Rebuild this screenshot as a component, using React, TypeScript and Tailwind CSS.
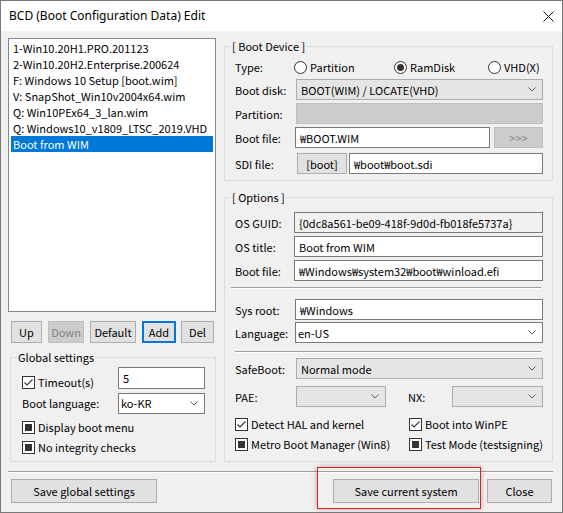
import React from 'react';

const items = [
  '1-Win10.20H1.PRO.201123',
  '2-Win10.20H2.Enterprise.200624',
  'F: Windows 10 Setup [boot.wim]',
  'V: SnapShot_Win10v2004x64.wim',
  'Q: Win10PEx64_3_lan.wim',
  'Q: Windows10_v1809_LTSC_2019.VHD',
  'Boot from WIM',
];

function Chevron({ light }: { light?: boolean }) {
  return (
    <svg width="8" height="5" viewBox="0 0 8 5" className="shrink-0">
      <path d="M0.5 0.5 L4 4 L7.5 0.5" fill="none" stroke={light ? '#c4c4c4' : '#606060'} strokeWidth="1" />
    </svg>
  );
}

function Btn({
  children,
  className = '',
  disabled,
  focused,
}: {
  children: React.ReactNode;
  className?: string;
  disabled?: boolean;
  focused?: boolean;
}) {
  const tone = disabled
    ? 'bg-[#cccccc] border border-[#bfbfbf] text-[#838383]'
    : focused
      ? 'bg-[#e1e1e1] border-2 border-[#0078d7]'
      : 'bg-[#e1e1e1] border border-[#adadad]';
  return <div className={`flex items-center justify-center shrink-0 whitespace-nowrap ${tone} ${className}`}>{children}</div>;
}

function TextBox({ value, className = '', readOnly }: { value: string; className?: string; readOnly?: boolean }) {
  return (
    <div
      className={`h-[21px] min-w-0 flex items-center pl-[4px] border border-[#7a7a7a] whitespace-nowrap overflow-hidden ${
        readOnly ? 'bg-[#f0f0f0]' : 'bg-white'
      } ${className}`}
    >
      {value}
    </div>
  );
}

function Select({
  value = '',
  kind = 'list',
  className = '',
}: {
  value?: string;
  kind?: 'list' | 'edit' | 'off';
  className?: string;
}) {
  const tone =
    kind === 'edit'
      ? 'bg-white border-[#7a7a7a] pl-[2px]'
      : kind === 'off'
        ? 'bg-[#cccccc] border-[#bfbfbf] pl-[4px]'
        : 'bg-[#e5e5e5] border-[#acacac] pl-[4px]';
  return (
    <div className={`h-[21px] min-w-0 flex items-center justify-between border pr-[6px] ${tone} ${className}`}>
      <span className="whitespace-nowrap">{value}</span>
      <Chevron light={kind === 'off'} />
    </div>
  );
}

function Check({ state, label, className = '' }: { state: 'checked' | 'mixed'; label: string; className?: string }) {
  return (
    <div className={`flex items-center h-4 gap-[3px] ${className}`}>
      <div className="w-[13px] h-[13px] border border-[#333333] bg-white flex items-center justify-center shrink-0">
        {state === 'checked' ? (
          <svg width="11" height="11" viewBox="0 0 11 11">
            <path d="M1.5 5.5 L4 8 L9.5 2.5" fill="none" stroke="#333333" strokeWidth="1.1" />
          </svg>
        ) : (
          <div className="w-[7px] h-[7px] bg-[#333333]" />
        )}
      </div>
      <span className="whitespace-nowrap">{label}</span>
    </div>
  );
}

function Radio({ checked, label, className = '' }: { checked?: boolean; label: string; className?: string }) {
  return (
    <div className={`flex items-center gap-[3px] ${className}`}>
      <div className="w-[13px] h-[13px] rounded-full border border-[#333333] bg-white flex items-center justify-center shrink-0">
        {checked && <div className="w-[7px] h-[7px] rounded-full bg-[#333333]" />}
      </div>
      <span>{label}</span>
    </div>
  );
}

function Group({
  title,
  className = '',
  children,
}: {
  title: string;
  className?: string;
  children: React.ReactNode;
}) {
  return (
    <fieldset className={`min-w-0 border border-[#dcdcdc] ${className}`}>
      <legend className="ml-[6px] px-[1px] leading-4 h-4">{title}</legend>
      {children}
    </fieldset>
  );
}

function Sep({ className = '' }: { className?: string }) {
  return <div className={`h-[2px] border-t border-t-[#a0a0a0] border-b border-b-white ${className}`} />;
}

export default function App() {
  return (
    <div className="relative w-[563px] h-[513px] border border-[#7a7a7a] bg-[#f0f0f0] flex flex-col text-[11px] leading-4 text-black font-['Noto_Sans_CJK_KR',sans-serif]">
      {/* title bar */}
      <div className="h-[30px] bg-white flex items-center justify-between pl-[8px] pr-[8px] shrink-0">
        <span className="text-[12px] font-['Noto_Sans',sans-serif]">BCD (Boot Configuration Data) Edit</span>
        <svg width="11" height="11" viewBox="0 0 11 11">
          <path d="M0.5 0.5 L10.5 10.5 M10.5 0.5 L0.5 10.5" stroke="#111" strokeWidth="1" />
        </svg>
      </div>

      <div className="flex px-[7px] pt-[7px] gap-[8px]">
        {/* left column */}
        <div className="w-[208px] flex flex-col shrink-0">
          <div className="h-[274px] border border-[#828790] bg-white pt-[1px] px-[2px] overflow-hidden">
            {items.map((it, i) => (
              <div
                key={it}
                className={`h-4 pl-[2px] whitespace-nowrap ${i === items.length - 1 ? 'bg-[#0078d7] text-white' : ''}`}
              >
                {it}
              </div>
            ))}
          </div>

          <div className="flex mt-[9px] pl-[3px] gap-[6px]">
            <Btn className="w-[31px] h-[22px]">Up</Btn>
            <Btn className="w-[36px] h-[22px]" disabled>
              Down
            </Btn>
            <Btn className="w-[46px] h-[22px]">Default</Btn>
            <Btn className="w-[34px] h-[22px]" focused>
              Add
            </Btn>
            <Btn className="w-[33px] h-[22px] -ml-px">Del</Btn>
          </div>

          <Group title="Global settings" className="mt-[6px] ml-[2px] w-[206px]">
            <div className="pl-[11px] pr-[10px] pt-[2px] pb-[6px] flex flex-col">
              <div className="flex items-start justify-between h-[22px]">
                <Check state="checked" label="Timeout(s)" className="mt-[7px]" />
                <div className="w-[87px] h-[22px] bg-white border border-[#7a7a7a] flex items-center pl-[4px]">5</div>
              </div>
              <div className="flex items-center justify-between h-[20px] mt-[4px]">
                <span>Boot language:</span>
                <Select value="ko-KR" kind="edit" className="w-[87px] h-[20px] pr-[4px]" />
              </div>
              <div className="mt-[6px]">
                <Check state="mixed" label="Display boot menu" />
              </div>
              <div className="mt-[4px]">
                <Check state="mixed" label="No integrity checks" />
              </div>
            </div>
          </Group>
        </div>

        {/* right column */}
        <div className="w-[329px] flex flex-col shrink-0">
          <Group title="[ Boot Device ]" className="w-full">
            <div className="pl-[10px] pr-[9px] pt-[3px] pb-[6px] flex flex-col">
              <div className="flex items-center h-[20px]">
                <span className="w-[59px] shrink-0">Type:</span>
                <Radio label="Partition" className="w-[100px]" />
                <Radio label="RamDisk" checked className="w-[94px]" />
                <Radio label="VHD(X)" />
              </div>
              <div className="flex items-center mt-[2px]">
                <span className="w-[61px] shrink-0">Boot disk:</span>
                <Select value="BOOT(WIM) / LOCATE(VHD)" className="flex-1" />
              </div>
              <div className="flex items-center mt-[3px]">
                <span className="w-[61px] shrink-0">Partition:</span>
                <Select kind="off" className="flex-1" />
              </div>
              <div className="flex items-center mt-[3px]">
                <span className="w-[60px] shrink-0">Boot file:</span>
                <TextBox value="₩BOOT.WIM" className="w-[195px] shrink-0" />
                <Btn disabled className="ml-[4px] flex-1 h-[21px]">
                  &gt;&gt;&gt;
                </Btn>
              </div>
              <div className="flex items-center mt-[5px]">
                <span className="w-[62px] shrink-0">SDI file:</span>
                <Btn className="w-[50px] h-[21px]">[boot]</Btn>
                <TextBox value="₩boot₩boot.sdi" className="ml-[2px] flex-1" />
              </div>
            </div>
          </Group>

          <Group title="[ Options ]" className="w-full mt-[8px]">
            <div className="pl-[10px] pr-[9px] pt-[7px] pb-[9px] flex flex-col">
              <div className="flex items-center">
                <span className="w-[59px] shrink-0">OS GUID:</span>
                <TextBox value="{0dc8a561-be09-418f-9d0d-fb018fe5737a}" readOnly className="flex-1" />
              </div>
              <div className="flex items-center mt-[3px]">
                <span className="w-[59px] shrink-0">OS title:</span>
                <TextBox value="Boot from WIM" className="flex-1" />
              </div>
              <div className="flex items-center mt-[3px]">
                <span className="w-[59px] shrink-0">Boot file:</span>
                <TextBox value="₩Windows₩system32₩boot₩winload.efi" className="flex-1" />
              </div>
              <Sep className="mt-[6px] -ml-[4px] mr-[2px]" />
              <div className="flex items-center mt-[10px]">
                <span className="w-[60px] shrink-0">Sys root:</span>
                <TextBox value="₩Windows" className="flex-1" />
              </div>
              <div className="flex items-center mt-[2px]">
                <span className="w-[60px] shrink-0">Language:</span>
                <Select value="en-US" kind="edit" className="flex-1" />
              </div>
              <Sep className="mt-[8px] mr-[2px]" />
              <div className="flex items-center mt-[5px]">
                <span className="w-[61px] shrink-0">SafeBoot:</span>
                <Select value="Normal mode" className="flex-1" />
              </div>
              <div className="flex items-center mt-[7px]">
                <span className="w-[61px] shrink-0">PAE:</span>
                <Select className="w-[90px] h-[20px] shrink-0" />
                <span className="ml-[22px] w-[44px] shrink-0">NX:</span>
                <Select className="flex-1 h-[20px]" />
              </div>
              <div className="flex mt-[9px]">
                <div className="w-[174px] shrink-0">
                  <Check state="checked" label="Detect HAL and kernel" />
                </div>
                <Check state="checked" label="Boot into WinPE" />
              </div>
              <div className="flex mt-[4px]">
                <div className="w-[174px] shrink-0">
                  <Check state="mixed" label="Metro Boot Manager (Win8)" />
                </div>
                <Check state="mixed" label="Test Mode (testsigning)" />
              </div>
            </div>
          </Group>
        </div>
      </div>

      <Sep className="mt-[9px] ml-[7px] mr-[9px]" />

      <div className="flex items-center justify-between pl-[10px] pr-[10px] mt-[6px]">
        <Btn className="w-[146px] h-[24px]">Save global settings</Btn>
        <div className="flex gap-[8px]">
          <Btn className="w-[146px] h-[24px]">Save current system</Btn>
          <Btn className="w-[65px] h-[24px]">Close</Btn>
        </div>
      </div>

      {/* red highlight annotation */}
      <div className="absolute left-[316px] top-[466px] w-[164px] h-[42px] border border-[#e02020] shadow-[0_0_5px_rgba(0,0,0,0.3)] pointer-events-none" />
    </div>
  );
}
